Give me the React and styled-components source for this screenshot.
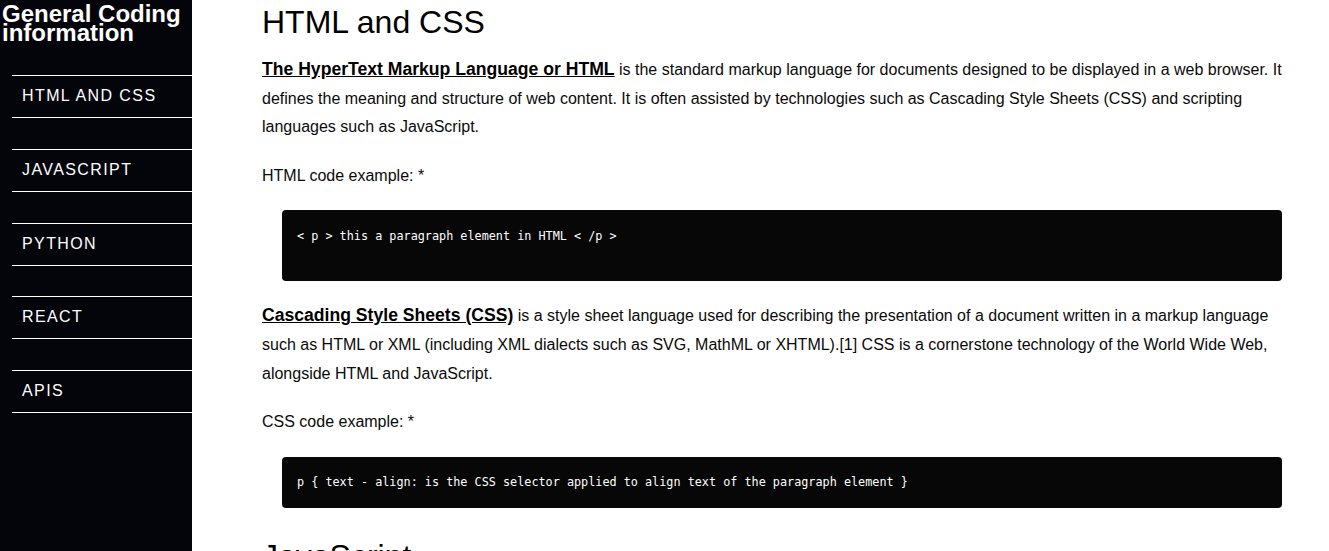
import React from "react";
import styled, { createGlobalStyle } from "styled-components";

const Global = createGlobalStyle`
  html, body { margin: 0; padding: 0; background: #fff; }
  body { font-family: "Liberation Sans", Arial, sans-serif; overflow: hidden; }
  * { box-sizing: border-box; }
`;

const Page = styled.div`
  display: flex;
  height: 100vh;
  overflow: hidden;
`;

const Sidebar = styled.nav`
  flex: 0 0 192px;
  background: #03050a;
  padding-top: 4px;
  color: #fff;
`;

const Title = styled.header`
  font-size: 24px;
  font-weight: 700;
  line-height: 19px;
  padding-left: 2px;
  margin: 0 0 33px;
`;

const NavList = styled.ul`
  list-style: none;
  margin: 0;
  padding: 0 0 0 12px;
  display: flex;
  flex-direction: column;
  gap: 30.75px;
`;

const NavLink = styled.a`
  display: block;
  border-top: 1px solid #fff;
  border-bottom: 1px solid #fff;
  padding: 9px 10px 11px;
  line-height: 21px;
  font-size: 16px;
  letter-spacing: 1.4px;
  color: #fff;
  text-decoration: none;
`;

const Main = styled.main`
  flex: 1;
  padding: 4px 47px 0 70px;
  color: #0a0a0a;
  display: flex;
  flex-direction: column;
  gap: 10px;
`;

const Section = styled.section``;

const Heading = styled.h2`
  margin: 0 0 14px;
  font-size: 32px;
  font-weight: 400;
  line-height: 37px;
  color: #000;
`;

const Para = styled.p`
  margin: 0 0 20px;
  font-size: 16px;
  line-height: 28.6px;
`;

const Term = styled.a`
  font-size: 17.6px;
  font-weight: 700;
  color: #000;
  text-decoration: underline;
`;

const Code = styled.pre`
  margin: 1px 0 20px 20px;
  padding: 15.5px 15px ${(p) => (p.$extra ? 35.5 : 15.5)}px;
  background: #070707;
  border-radius: 4px;
  color: #fff;
  font-family: "DejaVu Sans Mono", Consolas, monospace;
  font-size: 11.8px;
  line-height: 20px;
  white-space: pre-wrap;
`;

const links = ["HTML AND CSS", "JAVASCRIPT", "PYTHON", "REACT", "APIS"];

export default function App() {
  return (
    <>
      <Global />
      <Page>
        <Sidebar>
          <Title>General Coding information</Title>
          <NavList>
            {links.map((l) => (
              <li key={l}>
                <NavLink href="#">{l}</NavLink>
              </li>
            ))}
          </NavList>
        </Sidebar>
        <Main>
          <Section>
            <Heading>HTML and CSS</Heading>
            <Para>
              <Term href="#">The HyperText Markup Language or HTML</Term> is the
              standard markup language for documents designed to be displayed in
              a web browser. It defines the meaning and structure of web
              content. It is often assisted by technologies such as Cascading
              Style Sheets (CSS) and scripting languages such as JavaScript.
            </Para>
            <Para>HTML code example: *</Para>
            <Code $extra>{"< p > this a paragraph element in HTML < /p >"}</Code>
            <Para>
              <Term href="#">Cascading Style Sheets (CSS)</Term> is a style sheet
              language used for describing the presentation of a document
              written in a markup language such as HTML or XML (including XML
              dialects such as SVG, MathML or XHTML).[1] CSS is a cornerstone
              technology of the World Wide Web, alongside HTML and JavaScript.
            </Para>
            <Para>CSS code example: *</Para>
            <Code>
              {"p { text - align: is the CSS selector applied to align text of the paragraph element }"}
            </Code>
          </Section>
          <Section>
            <Heading>JavaScript</Heading>
            <Para>
              JavaScript is a programming language that is one of the core
              technologies of the World Wide Web, alongside HTML and CSS.
            </Para>
          </Section>
        </Main>
      </Page>
    </>
  );
}
